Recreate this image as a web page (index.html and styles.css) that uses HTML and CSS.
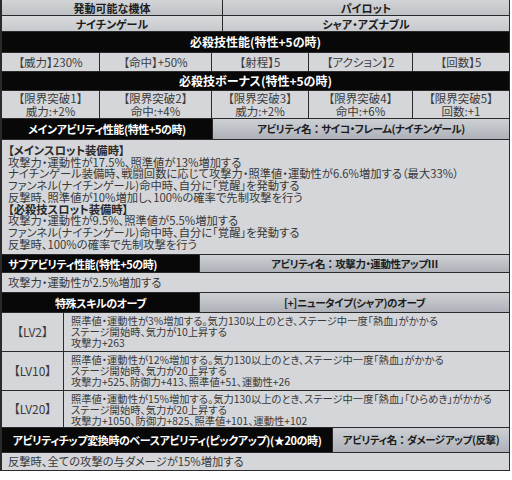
FILE: index.html
```html
<!DOCTYPE html>
<html lang="ja">
<head>
<meta charset="utf-8">
<link rel="stylesheet" href="styles.css">
</head>
<body>
<div class="tbl">
  <div class="row pair r-a">
    <div class="cell hd">発動可能な機体</div>
    <div class="cell hd">パイロット</div>
  </div>
  <div class="row pair r-b">
    <div class="cell hd2">ナイチンゲール</div>
    <div class="cell hd2">シャア・アズナブル</div>
  </div>
  <div class="row r-bar1"><div class="cell bar">必殺技性能(特性+5の時)</div></div>
  <div class="row five r-d">
    <div class="cell dc">【威力】230%</div>
    <div class="cell dc">【命中】+50%</div>
    <div class="cell dc">【射程】5</div>
    <div class="cell dc">【アクション】2</div>
    <div class="cell dc">【回数】5</div>
  </div>
  <div class="row r-bar2"><div class="cell bar">必殺技ボーナス(特性+5の時)</div></div>
  <div class="row five r-f">
    <div class="cell dc two">【限界突破1】<br>威力:+2%</div>
    <div class="cell dc two">【限界突破2】<br>命中:+4%</div>
    <div class="cell dc two">【限界突破3】<br>威力:+2%</div>
    <div class="cell dc two">【限界突破4】<br>命中:+6%</div>
    <div class="cell dc two">【限界突破5】<br>回数:+1</div>
  </div>
  <div class="row split-main r-g">
    <div class="cell bar sm">メインアビリティ性能(特性+5の時)</div>
    <div class="cell gh">アビリティ名<span class="colon">：</span>サイコ・フレーム(ナイチンゲール)</div>
  </div>
  <div class="row r-h">
    <div class="cell txt">
      <p class="sub">【メインスロット装備時】</p>
      <p>攻撃力・運動性が17.5%、照準値が13%増加する</p>
      <p>ナイチンゲール装備時、戦闘回数に応じて攻撃力・照準値・運動性が6.6%増加する（最大33%）</p>
      <p>ファンネル(ナイチンゲール)命中時、自分に「覚醒」を発動する</p>
      <p>反撃時、照準値が10%増加し、100%の確率で先制攻撃を行う</p>
      <p class="sub">【必殺技スロット装備時】</p>
      <p>攻撃力・運動性が9.5%、照準値が5.5%増加する</p>
      <p>ファンネル(ナイチンゲール)命中時、自分に「覚醒」を発動する</p>
      <p>反撃時、100%の確率で先制攻撃を行う</p>
    </div>
  </div>
  <div class="row split-sub r-i">
    <div class="cell bar sm left">サブアビリティ性能(特性+5の時)</div>
    <div class="cell gh">アビリティ名<span class="colon">：</span>攻撃力・運動性アップⅢ</div>
  </div>
  <div class="row r-j">
    <div class="cell txt one">攻撃力・運動性が2.5%増加する</div>
  </div>
  <div class="row split-sub r-k">
    <div class="cell bar sm">特殊スキルのオーブ</div>
    <div class="cell gh">[+]ニュータイプ(シャア)のオーブ</div>
  </div>
  <div class="row lv r-l">
    <div class="cell dc lvl">【LV2】</div>
    <div class="cell txt lvt">
      <p>照準値・運動性が3%増加する。気力130以上のとき、ステージ中一度「熱血」がかかる</p>
      <p>ステージ開始時、気力が10上昇する</p>
      <p>攻撃力+263</p>
    </div>
  </div>
  <div class="row lv r-m">
    <div class="cell dc lvl">【LV10】</div>
    <div class="cell txt lvt">
      <p>照準値・運動性が12%増加する。気力130以上のとき、ステージ中一度「熱血」がかかる</p>
      <p>ステージ開始時、気力が20上昇する</p>
      <p>攻撃力+525、防御力+413、照準値+51、運動性+26</p>
    </div>
  </div>
  <div class="row lv r-n">
    <div class="cell dc lvl">【LV20】</div>
    <div class="cell txt lvt">
      <p>照準値・運動性が15%増加する。気力130以上のとき、ステージ中一度「熱血」「ひらめき」がかかる</p>
      <p>ステージ開始時、気力が20上昇する</p>
      <p>攻撃力+1050、防御力+825、照準値+101、運動性+102</p>
    </div>
  </div>
  <div class="row split-chip r-o">
    <div class="cell bar sm">アビリティチップ変換時のベースアビリティ(ピックアップ)(★20の時)</div>
    <div class="cell gh">アビリティ名<span class="colon">：</span>ダメージアップ(反撃)</div>
  </div>
  <div class="row r-p">
    <div class="cell txt one">反撃時、全ての攻撃の与ダメージが15%増加する</div>
  </div>
</div>
</body>
</html>
```

FILE: styles.css
```css
* { box-sizing: border-box; margin: 0; padding: 0; }
body {
  background: #ffffff;
  font-family: "Noto Sans CJK JP", "Noto Sans", sans-serif;
  font-feature-settings: "palt" 1;
  color: #3a3a3a;
}
.tbl {
  width: 510px;
  background: #2a2a2a;
  padding: 0 1px 1px 2px;
  display: flex;
  flex-direction: column;
  gap: 1px;
}
.row { display: grid; gap: 1px; grid-template-columns: 1fr; }
.pair { grid-template-columns: 220px 1fr; }
.five { grid-template-columns: 97px 111px 96px 103px 96px; }
.split-main { grid-template-columns: 210px 1fr; }
.split-sub { grid-template-columns: 197px 1fr; }
.lv { grid-template-columns: 61px 1fr; }
.split-chip { grid-template-columns: 330px 1fr; }

.r-a, .r-b { height: 15px; }
.r-bar1 { height: 20px; }
.r-d { height: 18px; }
.r-bar2 { height: 18px; }
.r-f { height: 27px; }
.r-g { height: 20px; }
.r-h { height: 114px; }
.r-i { height: 17px; }
.r-j { height: 19px; }
.r-k { height: 19px; }
.r-l { height: 38px; }
.r-m { height: 38px; }
.r-n { height: 36px; }
.r-o { height: 24px; }
.r-p { height: 17px; }

.cell {
  display: flex;
  align-items: center;
  justify-content: center;
  text-align: center;
  white-space: nowrap;
  overflow: hidden;
}
.hd {
  background: linear-gradient(#d2d4d7, #bec1c5);
  color: #1c1c1c;
  font-weight: bold;
  font-size: 11px;
  line-height: 12px;
}
.hd2 {
  background: linear-gradient(#d8dadd, #c6c9cd);
  color: #1c1c1c;
  font-weight: bold;
  font-size: 11px;
  line-height: 12px;
}
.bar {
  background: #080808;
  color: #ffffff;
  font-weight: bold;
  font-size: 12px;
  line-height: 14px;
}
.bar.sm { font-size: 11px; letter-spacing: -0.4px; }
.bar.left { justify-content: flex-start; padding-left: 6px; }
.gh {
  background: linear-gradient(#cdd0d4, #aeb2b8);
  color: #1c1c1c;
  font-weight: bold;
  font-size: 10.5px;
  letter-spacing: -0.4px;
  line-height: 14px;
}
.colon { font-feature-settings: normal; }
.dc {
  background: #d4d6da;
  font-size: 11.5px;
  line-height: 12.5px;
  color: #3c3c3c;
}
.dc.lvl { font-size: 12px; }
.txt {
  background: #d4d6da;
  font-size: 11.3px;
  line-height: 11.7px;
  color: #383838;
  display: block;
  text-align: left;
  padding: 5px 0 0 6px;
}
.txt .sub { font-weight: bold; color: #2a2a2a; }
.txt.one { display: flex; justify-content: flex-start; padding: 0 0 0 6px; }
.txt.lvt { padding: 2px 0 0 7px; font-size: 10.3px; line-height: 11px; }
```
